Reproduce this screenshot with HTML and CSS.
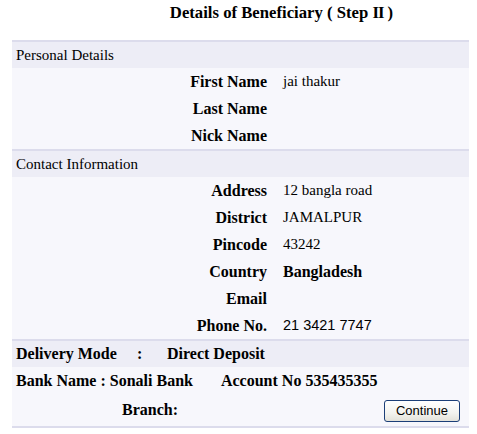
FILE: index.html
```html
<!DOCTYPE html>
<html>
<head>
<meta charset="utf-8">
<link rel="stylesheet" href="styles.css">
</head>
<body>
<h1 class="title">Details of Beneficiary ( Step <span class="roman">II</span> )</h1>
<div class="panel">
  <div class="section-head">Personal Details</div>
  <div class="field"><span class="label">First Name</span><span class="value">jai thakur</span></div>
  <div class="field"><span class="label">Last Name</span><span class="value"></span></div>
  <div class="field"><span class="label">Nick Name</span><span class="value"></span></div>

  <div class="section-head">Contact Information</div>
  <div class="field"><span class="label">Address</span><span class="value">12 bangla road</span></div>
  <div class="field"><span class="label">District</span><span class="value">JAMALPUR</span></div>
  <div class="field"><span class="label">Pincode</span><span class="value">43242</span></div>
  <div class="field"><span class="label">Country</span><span class="value strong">Bangladesh</span></div>
  <div class="field"><span class="label">Email</span><span class="value"></span></div>
  <div class="field"><span class="label">Phone No.</span><span class="value sans">21 3421 7747</span></div>

  <div class="delivery">
    <span class="d-label">Delivery Mode</span>
    <span class="d-colon">:</span>
    <span class="d-value">Direct Deposit</span>
  </div>
  <div class="bank">
    <span>Bank Name : Sonali Bank</span>
    <span>Account No 535435355</span>
  </div>
  <div class="branch">
    <span class="branch-label">Branch:</span>
    <button class="btn" type="button">Continue</button>
  </div>
</div>
</body>
</html>
```

FILE: styles.css
```css
html, body {
  background: #ffffff;
}
body {
  margin: 0 8px;
  font-family: "Liberation Serif", "Times New Roman", serif;
  font-size: 15px;
  color: #000;
}
.title {
  margin: 0;
  padding: 3px 0 0 86px;
  height: 40px;
  box-sizing: border-box;
  text-align: center;
  font-family: "Liberation Serif", "Times New Roman", serif;
  font-size: 16.7px;
  line-height: 20px;
  font-weight: bold;
}
.roman {
  letter-spacing: -1px;
}
.panel {
  margin-left: 4px;
  border-bottom: 2px solid #dcdcec;
  font-family: "Liberation Serif", "Times New Roman", serif;
}
.section-head {
  height: 28px;
  box-sizing: border-box;
  border-top: 2px solid #dcdcec;
  background: #ededf6;
  padding-left: 4px;
  line-height: 26px;
}
.field {
  display: grid;
  grid-template-columns: 255px 1fr;
  column-gap: 16px;
  height: 27px;
  line-height: 27px;
  background: #f7f7fc;
}
.label {
  text-align: right;
  font-weight: bold;
  font-size: 16px;
}
.value.strong {
  font-weight: bold;
  font-size: 16px;
}
.value.sans {
  font-family: "Liberation Sans", Arial, sans-serif;
  font-size: 14.5px;
}
.delivery {
  display: grid;
  grid-template-columns: 121px 30px auto;
  height: 28px;
  box-sizing: border-box;
  border-top: 2px solid #dcdcec;
  background: #ededf6;
  padding-left: 4px;
  line-height: 26px;
  font-weight: bold;
  font-size: 16px;
}
.bank {
  display: flex;
  gap: 28px;
  height: 27px;
  line-height: 27px;
  padding-left: 4px;
  background: #f7f7fc;
  font-weight: bold;
  font-size: 16px;
}
.branch {
  display: flex;
  align-items: center;
  height: 32px;
  padding-left: 110px;
  padding-right: 9px;
  background: #f7f7fc;
}
.branch-label {
  font-weight: bold;
  font-size: 16px;
}
.btn {
  margin-left: auto;
  width: 76px;
  height: 22px;
  padding: 0;
  margin-top: 1px;
  font-family: "Liberation Sans", Arial, sans-serif;
  font-size: 13px;
  color: #000;
  background: linear-gradient(#ffffff, #f3f3ef 60%, #e3e2da);
  border: 1px solid #1c3f78;
  border-radius: 3px;
}
```
